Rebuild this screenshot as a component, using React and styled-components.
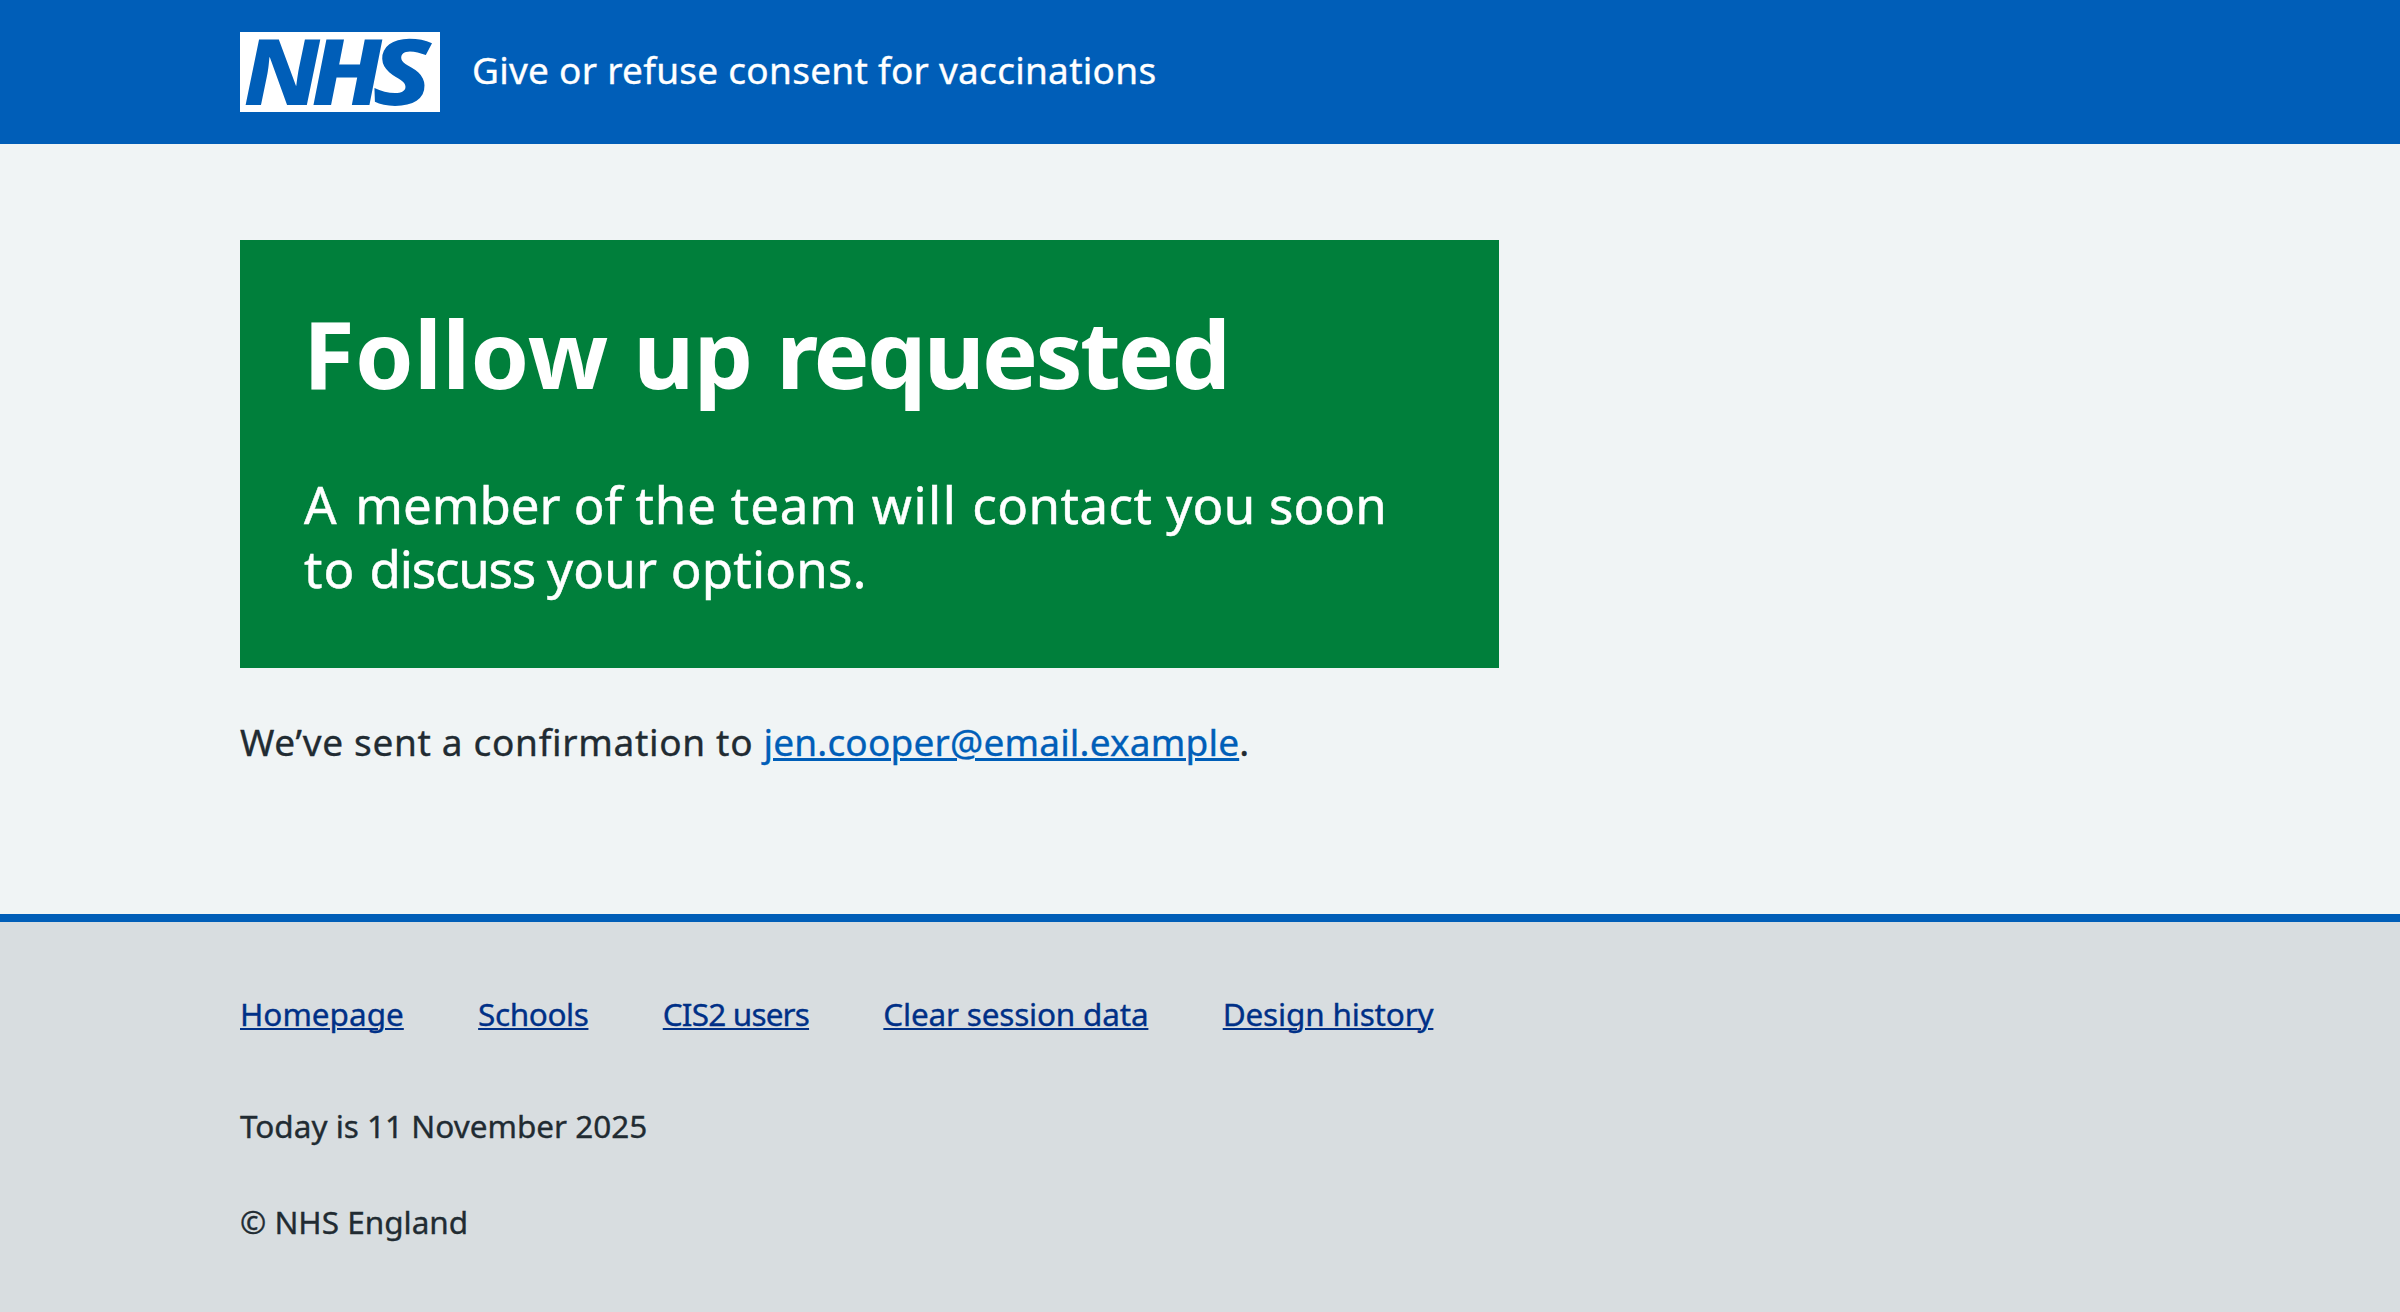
import React from "react";
import styled, { createGlobalStyle } from "styled-components";

const GlobalStyle = createGlobalStyle`
  body {
    margin: 0;
    background: #f0f4f5;
    color: #212b32;
    font-family: "Noto Sans", "Open Sans", sans-serif;
    font-weight: 400;
    font-kerning: normal;
    -webkit-text-stroke: 0.35px currentColor;
  }
`;

const Page = styled.div`
  display: flex;
  flex-direction: column;
  min-height: 1312px;
`;

const Header = styled.header`
  display: flex;
  align-items: flex-start;
  gap: 32px;
  height: 144px;
  box-sizing: border-box;
  padding: 32px 240px;
  background: #005eb8;
  color: #fff;
`;

const Logo = styled.svg`
  display: block;
  width: 200px;
  height: 80px;
  overflow: visible;
  background: #fff;
`;

const LogoLetter = styled.text`
  fill: #005eb8;
  font-family: "Noto Sans", "Open Sans", sans-serif;
  font-size: 91.6px;
  font-style: italic;
  font-weight: 800;
  -webkit-text-stroke: 0;
`;

const Spaced = styled.span`
  letter-spacing: ${(p) => p.$spacing || 0}px;
`;

const ServiceName = styled.div`
  margin-top: 10px;
  font-size: 37px;
  line-height: 56px;
`;

const Main = styled.main`
  padding: 96px 240px 144px;
`;

const Panel = styled.section`
  width: 1259px;
  height: 428px;
  box-sizing: border-box;
  padding: 61px 64px 0;
  background: #007f3b;
  color: #fff;
`;

const PanelTitle = styled.h1`
  margin: 0 0 67px -1px;
  font-size: 94px;
  font-weight: 700;
  line-height: 104px;
  white-space: nowrap;
  -webkit-text-stroke: 0;
`;

const PanelBody = styled.p`
  margin: 0;
  font-size: 51px;
  line-height: 64px;
  white-space: nowrap;
  -webkit-text-stroke: 0.5px currentColor;
`;

const Confirmation = styled.p`
  margin: 46px 0 0;
  font-size: 37px;
  line-height: 56px;
`;

const EmailLink = styled.a`
  color: #005eb8;
  letter-spacing: 0.18px;
  text-decoration: underline;
  text-decoration-thickness: 3px;
  text-underline-offset: 2px;
`;

const Footer = styled.footer`
  flex: 1;
  border-top: 8px solid #005eb8;
  padding: 68px 240px 0;
  background: #d8dde0;
  font-size: 31.5px;
  line-height: 48px;
`;

const FooterNav = styled.nav`
  display: flex;
  gap: 74.3px;
  margin-bottom: 64px;
`;

const FooterLink = styled.a`
  color: #003087;
  text-decoration: underline;
  text-decoration-thickness: 2px;
  text-underline-offset: 2px;
  letter-spacing: ${(p) => p.$spacing}px;
`;

const FooterText = styled.p`
  margin: 0;

  & + & {
    margin-top: 48px;
  }
`;

const links = [
  { label: "Homepage", spacing: 0 },
  { label: "Schools", spacing: -0.41 },
  { label: "CIS2 users", spacing: -0.82 },
  { label: "Clear session data", spacing: -0.2 },
  { label: "Design history", spacing: -0.18 },
];

const title = [
  ["Follow ", 0.3],
  ["up ", -0.7],
  ["requested", -2.7],
];

const firstLine = [
  ["A ", 2.7],
  ["member ", 0],
  ["of ", 0],
  ["the team ", 0.85],
  ["will ", 1.5],
  ["contact ", 0.5],
  ["you ", 0.3],
  ["soon", 0],
];

const secondLine = [
  ["to ", 1],
  ["discuss ", -1.2],
  ["your options.", 0.2],
];

function Words({ parts }) {
  return parts.map(([text, spacing]) => (
    <Spaced key={text} $spacing={spacing}>
      {text}
    </Spaced>
  ));
}

function NhsLogo() {
  return (
    <Logo viewBox="0 0 200 80" role="img" aria-label="NHS">
      <LogoLetter transform="translate(3.5 72.7) skewX(1.6) scale(1.104 1)">N</LogoLetter>
      <LogoLetter transform="translate(71.2 72.7) skewX(2.4) scale(1.133 1)">H</LogoLetter>
      <LogoLetter transform="translate(132.8 72.7) skewX(2) scale(1.22 1)">S</LogoLetter>
    </Logo>
  );
}

export default function App() {
  return (
    <Page>
      <GlobalStyle />
      <Header>
        <NhsLogo />
        <ServiceName>
          <Spaced $spacing={0.27}>Give or refuse consent for vaccinations</Spaced>
        </ServiceName>
      </Header>
      <Main>
        <Panel>
          <PanelTitle>
            <Words parts={title} />
          </PanelTitle>
          <PanelBody>
            <Words parts={firstLine} />
            <br />
            <Words parts={secondLine} />
          </PanelBody>
        </Panel>
        <Confirmation>
          <Spaced $spacing={0.68}>We’ve sent a confirmation to </Spaced>
          <EmailLink>jen.cooper@email.example</EmailLink>.
        </Confirmation>
      </Main>
      <Footer>
        <FooterNav>
          {links.map((link) => (
            <FooterLink key={link.label} $spacing={link.spacing}>
              {link.label}
            </FooterLink>
          ))}
        </FooterNav>
        <FooterText>Today is 11 November 2025</FooterText>
        <FooterText>© NHS England</FooterText>
      </Footer>
    </Page>
  );
}
